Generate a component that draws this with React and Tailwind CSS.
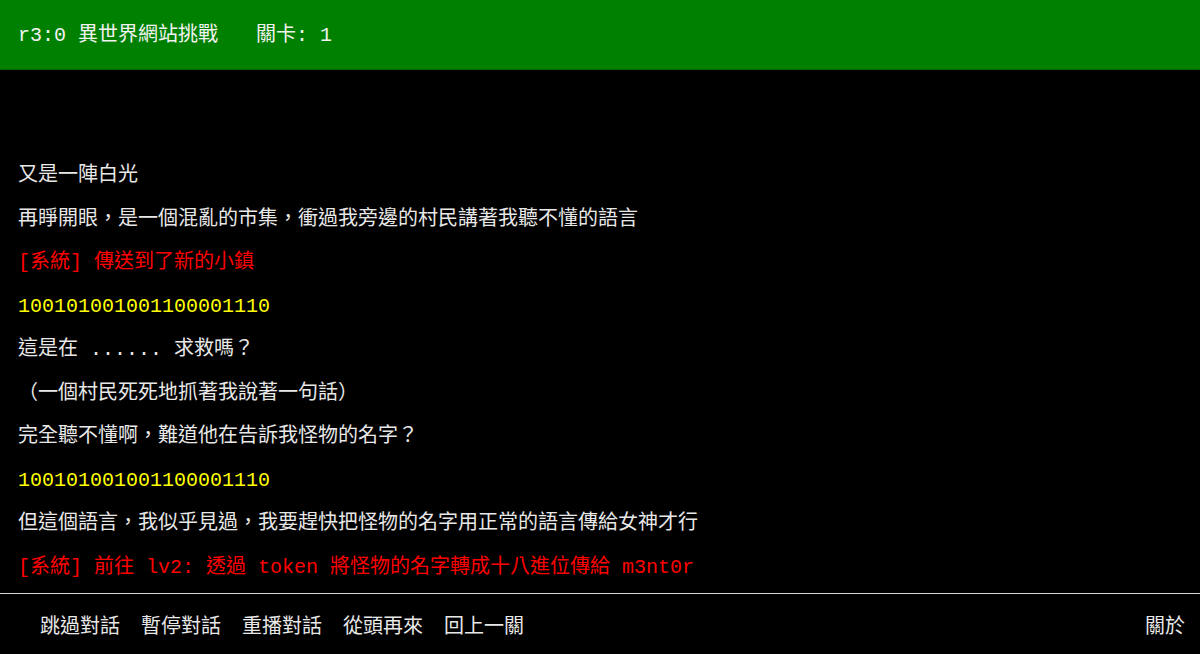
import React from 'react';

const lines = [
  { text: '又是一陣白光', color: 'text-[#e8e8e8]' },
  { text: '再睜開眼，是一個混亂的市集，衝過我旁邊的村民講著我聽不懂的語言', color: 'text-[#e8e8e8]' },
  { text: '[系統] 傳送到了新的小鎮', color: 'text-[#ff0000]' },
  { text: '100101001001100001110', color: 'text-[#ffff00]' },
  { text: '這是在 ...... 求救嗎？', color: 'text-[#e8e8e8]' },
  { text: '（一個村民死死地抓著我說著一句話）', color: 'text-[#e8e8e8]' },
  { text: '完全聽不懂啊，難道他在告訴我怪物的名字？', color: 'text-[#e8e8e8]' },
  { text: '100101001001100001110', color: 'text-[#ffff00]' },
  { text: '但這個語言，我似乎見過，我要趕快把怪物的名字用正常的語言傳給女神才行', color: 'text-[#e8e8e8]' },
  { text: '[系統] 前往 lv2: 透過 token 將怪物的名字轉成十八進位傳給 m3nt0r', color: 'text-[#ff0000]' },
];

const actions = ['跳過對話', '暫停對話', '重播對話', '從頭再來', '回上一關'];

const App = () => {
  return (
    <div className="h-screen w-full bg-black flex flex-col font-['Liberation_Mono','Noto_Sans_CJK_TC',monospace] text-[20px] overflow-hidden">
      {/* Header */}
      <header className="h-[70px] shrink-0 bg-[#008000] border-b border-[#006a00] flex items-center px-[18px] pt-[3px] text-[#f2f2f2]">
        <span className="whitespace-pre">r3:0 異世界網站挑戰</span>
        <span className="ml-[38px] whitespace-pre">關卡: 1</span>
      </header>

      {/* Dialogue */}
      <main className="flex-1 pt-[84px] px-[18px]">
        {lines.map((line, i) => (
          <p key={i} className={`leading-[43.5px] whitespace-pre ${line.color}`}>
            {line.text}
          </p>
        ))}
      </main>

      {/* Footer */}
      <footer className="h-[61px] shrink-0 border-t border-[#d8d8d8] flex items-center justify-between pl-[40px] pr-[15px] pt-[8px] text-[#e8e8e8]">
        <div className="flex items-center gap-[21px]">
          {actions.map((a) => (
            <button key={a} className="leading-[30px]">
              {a}
            </button>
          ))}
        </div>
        <button className="leading-[30px]">關於</button>
      </footer>
    </div>
  );
};

export default App;
